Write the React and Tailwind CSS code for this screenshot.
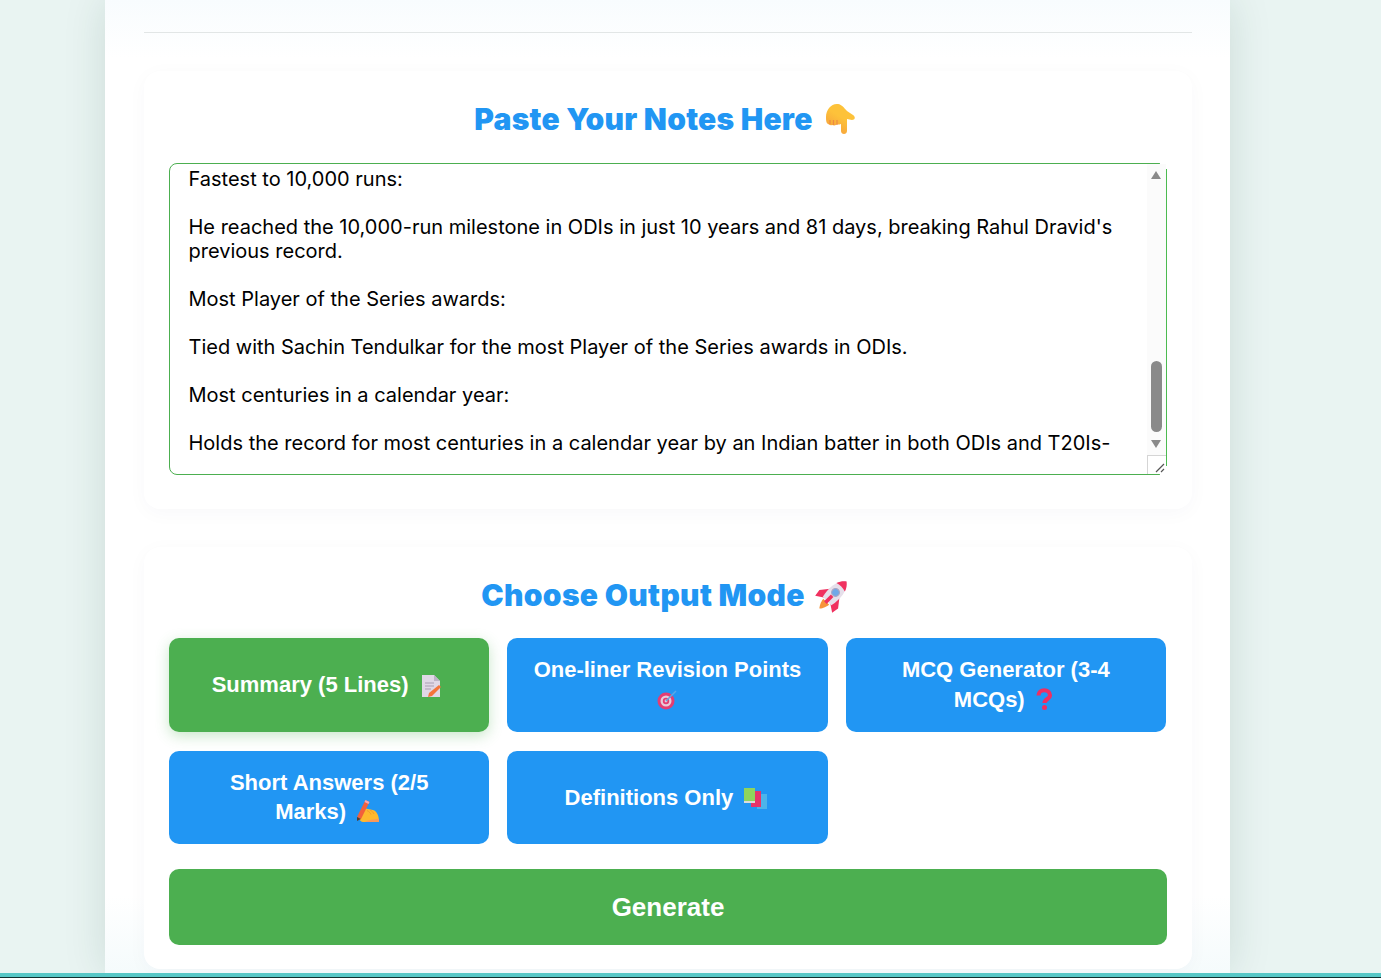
const lines = [
  "Fastest to 10,000 runs:",
  "",
  "He reached the 10,000-run milestone in ODIs in just 10 years and 81 days, breaking Rahul Dravid's",
  "previous record.",
  "",
  "Most Player of the Series awards:",
  "",
  "Tied with Sachin Tendulkar for the most Player of the Series awards in ODIs.",
  "",
  "Most centuries in a calendar year:",
  "",
  "Holds the record for most centuries in a calendar year by an Indian batter in both ODIs and T20Is-",
]

function HandDown() {
  return (
    <svg width="30" height="32" viewBox="0 0 30 32" className="inline-block">
      <defs>
        <linearGradient id="hand" x1="0.7" y1="0" x2="0.1" y2="1">
          <stop offset="0.4" stopColor="#fdc23a" />
          <stop offset="1" stopColor="#f59a3c" />
        </linearGradient>
      </defs>
      <path
        d="M0 14C0 6 6 0 12 1c4 .5 6 4 9 7l6 4c3 2 2 5-1 5l-5-1v12c0 4-6 4-6 0v-7c-2 1-4 0-5 1-2 1-3 0-4 0-2 1-3-1-4-1-2-1-2-4-2-7z"
        fill="url(#hand)"
      />
      <path d="M4 17v4M7.500 17v5M11 17v5" stroke="#ea7b45" strokeWidth="1.200" opacity="0.7" />
    </svg>
  )
}

function Rocket() {
  return (
    <svg width="32" height="32" viewBox="0 0 32 32" className="inline-block overflow-visible">
      <g transform="translate(16 16) rotate(45) scale(1.2) translate(-16 -16)">
        <path d="M12.500 24h7c-.5 4-2.500 7-3.500 8-1-1-3-4-3.500-8z" fill="#f7943a" />
        <path d="M10.500 14L5 21l1 6 6-4zM21.500 14l5.500 7-1 6-6-4z" fill="#f0315f" />
        <path d="M16 0c6 5 7 14 5 23H11C9 14 10 5 16 0z" fill="#e6dfea" />
        <path d="M16 0c2.500 2 4 4 5 7-3-1-7-1-10 0 1-3 2.500-5 5-7z" fill="#f0315f" />
        <circle cx="16" cy="13" r="3.200" fill="#6fa8e8" stroke="#a9a5c4" />
        <path d="M14.500 17h3v8h-3z" fill="#f0315f" />
      </g>
    </svg>
  )
}

function Memo() {
  return (
    <svg width="20" height="24" viewBox="0 0 20 24" className="-my-2 inline-block align-[2px]">
      <path d="M1 1h12l6 6v16H1z" fill="#e0d8e6" />
      <path d="M13 1l6 6h-6z" fill="#bcb3c6" />
      <path d="M4 9h9M4 12h9M4 15h6" stroke="#a79eb2" strokeWidth="1.200" />
      <path d="M18 11l2 2-9 9-4 1 1-4z" fill="#f4743b" />
    </svg>
  )
}

function Target() {
  return (
    <svg width="22" height="22" viewBox="0 0 22 22" className="-my-2 inline-block align-[4px]">
      <circle cx="10" cy="12" r="8.500" fill="#e43d72" />
      <circle cx="10" cy="12" r="5.500" fill="#e9cbd9" />
      <circle cx="10" cy="12" r="3.200" fill="#e43d72" />
      <circle cx="10" cy="12" r="1.400" fill="#e9cbd9" />
      <path d="M10 12L20 2" stroke="#5aa9e6" strokeWidth="1.500" />
    </svg>
  )
}

function Question() {
  return (
    <svg width="18" height="22" viewBox="0 0 18 22" className="-my-2 inline-block align-[5px]">
      <path d="M3.500 7.500c0-7 11.500-7 11.500 0 0 3.500-5.500 3.500-5.500 7.500" fill="none" stroke="#ef2f62" strokeWidth="4.200" />
      <circle cx="9.500" cy="19.500" r="2.500" fill="#ef2f62" />
    </svg>
  )
}

function Writing() {
  return (
    <svg width="25" height="24" viewBox="0 0 25 24" className="-my-2 inline-block align-[4px]">
      <path d="M5 13c3-4 6-4 8-3l5 1c4 1 6 6 6 12H8c-3 0-5-4-3-10z" fill="#fdb92e" />
      <path d="M10 23c3-2 9-3 14-3v3z" fill="#f8995a" />
      <path d="M12 11.500c2 1 3.500 2.500 4 4M15 11c2 1 3 2 4 4" fill="none" stroke="#ee9a2e" strokeWidth="1" />
      <path d="M10.500 1l4 2L6 20l-4-2z" fill="#f2603c" />
      <path d="M10.500 1l4 2-1 2-4-2z" fill="#f7a6b4" />
      <path d="M2 18l4 2-4 2z" fill="#5a3b30" />
    </svg>
  )
}

function Books() {
  return (
    <svg width="23" height="22" viewBox="0 0 23 22" className="-my-2 inline-block align-[3px]">
      <rect x="13" y="6" width="10" height="15" fill="#4cb4ea" />
      <rect x="7" y="3" width="10" height="16" fill="#e6336a" />
      <rect x="0" y="0" width="11" height="15" fill="#8fd45c" />
      <rect x="0" y="13" width="11" height="2" fill="#dcdcdc" />
    </svg>
  )
}

const modes = [
  { label: "Summary (5 Lines)", icon: <Memo />, gap: "ml-[6px] mr-[6px]", active: true },
  { label: "One-liner Revision Points", icon: <Target />, gap: "" },
  { label: "MCQ Generator (3-4 MCQs)", icon: <Question />, gap: "ml-[4px] mr-[5px]" },
  { label: "Short Answers (2/5 Marks)", icon: <Writing />, gap: "ml-[3px] mr-[3px]" },
  { label: "Definitions Only", icon: <Books />, gap: "ml-[5px] mr-[3px]" },
]

export default function App() {
  return (
    <div className="flex h-[978px] flex-col overflow-hidden bg-[#e9f4f2] font-['Inter',sans-serif]">
      <div className="flex min-h-0 flex-1 flex-col">
        <main className="ml-[105px] h-full w-[1125px] bg-[linear-gradient(to_bottom,#f8fcfe_0%,#ffffff_6%,#ffffff_92%,#f5fbfc_100%)] pt-[32px] pr-[38px] pl-[39px] shadow-[0_0_40px_rgba(0,60,50,0.13)]">
          <hr className="border-0 border-t border-[#e2e6e6]" />

          <section className="mt-[38px] h-[438px] rounded-2xl bg-white px-[25px] pt-[25px] shadow-[0_4px_20px_rgba(0,40,80,0.03)]">
            <h2 className="flex h-[46px] items-center justify-center gap-[13px] pr-[6px] text-[30px] font-black tracking-[0.25px] text-[#2196f3]">
              Paste Your Notes Here <HandDown />
            </h2>
            <div className="relative mt-[21px] h-[312px]">
              <div className="h-full overflow-hidden rounded-lg border border-[#4caf50] bg-white pt-[3px] pr-[40px] pl-[18.5px] text-[20px] leading-6 text-black">
                {lines.map((line, i) => (
                  <div key={i} className="h-6 whitespace-nowrap">{line}</div>
                ))}
              </div>
              {/* native looking scrollbar, sits over the border at both corners */}
              <div className="absolute top-0 right-0 flex h-full w-[20px] flex-col items-center pr-[2px]">
                <div className="absolute top-0 right-0 h-[7px] w-[7px] bg-white" />
                <div className="absolute right-0 bottom-0 h-[9px] w-[7px] bg-white" />
                <div className="absolute inset-y-px right-px w-[19px] bg-[#fbfbfb]" />
                <div className="absolute top-[6px] right-0 bottom-[9px] w-px bg-[#4cbb50]" />
                <span className="relative mt-2 h-0 w-0 border-x-[5px] border-b-[8px] border-x-transparent border-b-[#8a8a8a]" />
                <span className="relative mt-[182px] h-[71px] w-[11px] rounded-md bg-[#8a8a8a]" />
                <span className="relative mt-2 h-0 w-0 border-x-[5px] border-t-[8px] border-x-transparent border-t-[#8a8a8a]" />
                <span className="absolute right-px bottom-px flex h-[19px] w-[19px] items-end justify-end border-t border-l border-[#d5d5d5] bg-white">
                  <svg width="12" height="12" viewBox="0 0 12 12">
                    <path d="M2 10l8-8M7 10l3-3" stroke="#555" strokeWidth="1.200" />
                  </svg>
                </span>
              </div>
            </div>
          </section>

          <section className="mt-[38px] rounded-2xl bg-white px-[25px] pt-[25px] pb-[24px] shadow-[0_4px_20px_rgba(0,40,80,0.03)]">
            <h2 className="flex h-[46px] items-center justify-center gap-[12px] pr-[6px] text-[30px] font-black tracking-[0.33px] text-[#2196f3]">
              Choose Output Mode <Rocket />
            </h2>
            <div className="mt-[20px] grid grid-cols-3 gap-x-[18px] gap-y-[19px] pr-px">
              {modes.map((m) => (
                <button
                  key={m.label}
                  className={`h-[93.5px] rounded-[10px] px-[25px] text-center font-['Liberation_Sans',sans-serif] text-[22px] leading-[29.5px] font-bold text-white ${
                    m.active ? "bg-[#4caf50] shadow-[0_4px_14px_rgba(76,175,80,0.3)]" : "bg-[#2196f3]"
                  }`}
                >
                  {m.label} <span className={m.gap}>{m.icon}</span>
                </button>
              ))}
            </div>
            <button className="mt-[25px] h-[76px] w-full rounded-[10px] bg-[#4caf50] font-['Liberation_Sans',sans-serif] text-[26px] font-bold text-white">
              Generate
            </button>
          </section>
        </main>
      </div>
      <div className="h-[4px] shrink-0 bg-[#57c7c6]" />
      <div className="h-px shrink-0 bg-[#10302f]" />
    </div>
  )
}
